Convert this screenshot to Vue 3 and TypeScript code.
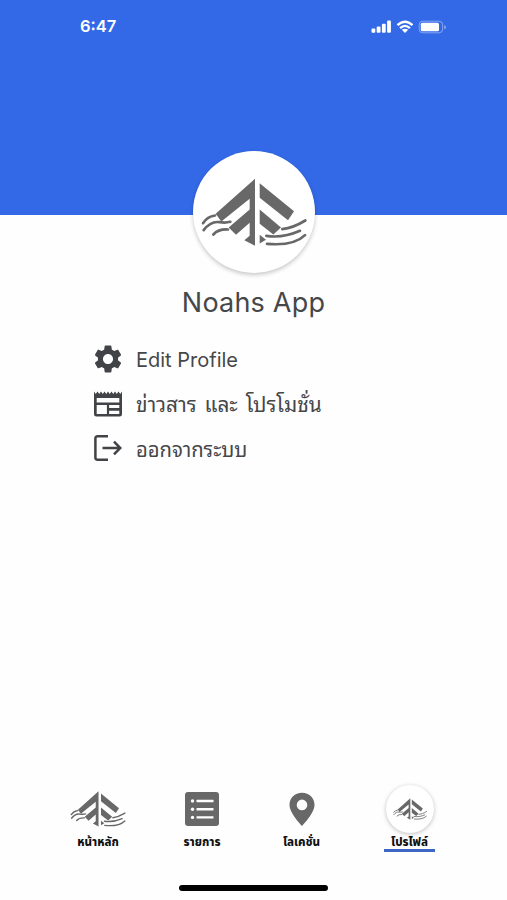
<script setup lang="ts">
import { ref } from 'vue'

type Icon = 'gear' | 'news' | 'exit'
type Tab = 'home' | 'list' | 'pin' | 'profile'

interface MenuItem {
  icon: Icon
  label: string
}

interface TabItem {
  id: Tab
  label: string
}

const menu: MenuItem[] = [
  { icon: 'gear', label: 'Edit Profile' },
  { icon: 'news', label: 'ข่าวสาร และ โปรโมชั่น' },
  { icon: 'exit', label: 'ออกจากระบบ' },
]

const tabs: TabItem[] = [
  { id: 'home', label: 'หน้าหลัก' },
  { id: 'list', label: 'รายการ' },
  { id: 'pin', label: 'โลเคชั่น' },
  { id: 'profile', label: 'โปรไฟล์' },
]

const active = ref<Tab>('profile')
</script>

<template>
  <svg class="defs" width="0" height="0" aria-hidden="true">
    <symbol id="logo" viewBox="45 98 318 206">
      <g fill="currentColor">
        <path d="M207 100V301L175 284L191 271V232L150 268L128 246L191 192V160L106 228L89 205Z" />
        <path d="M221 113L324 197L306 224L221 157Z" />
        <path d="M221 192L285 246L262 267L221 235Z" />
        <path d="M221 268L240 283L221 294Z" />
      </g>
      <g fill="none" stroke="currentColor" stroke-width="8" stroke-linecap="round">
        <path d="M51 233Q64 213 87 210" />
        <path d="M53 254C68 234 82 227 101 230Q118 233 133 229" />
        <path d="M82 267Q98 250 126 252" />
        <path d="M358 225C330 242 315 248 289 251" />
        <path d="M241 271C280 277 310 270 342 256" />
        <path d="M243 295C288 299 332 294 357 269" />
      </g>
    </symbol>
  </svg>

  <main class="screen">
    <header class="banner">
      <div class="status">
        <span class="time">6:47</span>
        <svg class="signals" width="76" height="16" viewBox="0 0 76 16" aria-hidden="true">
          <g fill="#fff">
            <rect x="0.500" y="9.500" width="3.800" height="4.200" rx="1" />
            <rect x="5.700" y="7.500" width="3.800" height="6.200" rx="1" />
            <rect x="10.900" y="4.800" width="3.800" height="8.900" rx="1" />
            <rect x="16.100" y="1.600" width="3.800" height="12.100" rx="1" />
            <path d="M30.800 10.800L34 14L37.200 10.800Q34 8.600 30.800 10.800Z" />
            <rect x="49.800" y="3.800" width="18.200" height="8.400" rx="1.500" />
            <path d="M73.300 6V10.400Q75 9.700 75 8.200Q75 6.700 73.300 6Z" opacity=".45" />
          </g>
          <g fill="none" stroke="#fff">
            <path d="M26.500 6.200Q34 -.8 41.500 6.200" stroke-width="2.500" />
            <path d="M29.100 9.100Q34 4.700 38.900 9.100" stroke-width="2.300" />
            <rect x="48.200" y="2.200" width="23.400" height="11.600" rx="3.500" opacity=".4" />
          </g>
        </svg>
      </div>
    </header>

    <section class="summary">
      <div class="avatar">
        <svg class="avatar-logo"><use href="#logo" /></svg>
      </div>
      <h1 class="name">Noahs App</h1>
    </section>

    <ul class="menu">
      <li v-for="item in menu" :key="item.icon" class="menu-item">
        <svg v-if="item.icon === 'gear'" class="menu-icon" viewBox="2 2 20 20">
          <path
            fill="currentColor"
            d="M19.140 12.940c.04-.3.060-.61.060-.94 0-.32-.02-.64-.07-.94l2.030-1.580c.18-.14.230-.41.120-.61l-1.920-3.320c-.12-.22-.37-.29-.59-.22l-2.390.96c-.5-.38-1.030-.7-1.620-.94l-.36-2.540c-.04-.24-.24-.41-.48-.41h-3.840c-.24 0-.43.17-.47.41l-.36 2.540c-.59.24-1.130.57-1.620.94l-2.390-.96c-.22-.08-.47 0-.59.22L2.740 8.870c-.12.21-.08.47.12.61l2.030 1.580c-.05.3-.09.63-.09.94s.02.64.070.94l-2.030 1.580c-.18.14-.23.41-.12.61l1.920 3.320c.12.22.370.29.590.22l2.390-.96c.5.38 1.030.7 1.620.94l.36 2.540c.05.24.240.41.480.41h3.840c.24 0 .44-.17.470-.41l.36-2.540c.59-.24 1.130-.56 1.620-.94l2.390.96c.22.080.470 0 .59-.22l1.920-3.320c.12-.22.070-.47-.12-.61l-2.010-1.580zM12 15.600c-1.980 0-3.600-1.620-3.600-3.600s1.620-3.600 3.600-3.600 3.600 1.620 3.600 3.600-1.620 3.600-3.600 3.600z"
          />
        </svg>
        <svg v-else-if="item.icon === 'news'" class="menu-icon" viewBox="0 0 28 28">
          <path
            fill="currentColor"
            fill-rule="evenodd"
            d="M0 1.500L1.750 4L3.500 1.500L5.250 4L7 1.500L8.750 4L10.500 1.500L12.250 4L14 1.500L15.750 4L17.500 1.500L19.250 4L21 1.500L22.750 4L24.500 1.500L26.250 4L28 1.500V23.900Q28 26.400 25.500 26.400H2.500Q0 26.400 0 23.900ZM2.700 7.900V12.600H25.300V7.900ZM2.700 14.900V23.900H12.900V14.900ZM15.100 14.900V18.100H25.300V14.900ZM15.100 20.700V23.900H25.300V20.700Z"
          />
        </svg>
        <svg v-else class="menu-icon" viewBox="0 0 28 28">
          <g fill="none" stroke="currentColor" stroke-width="2.500">
            <path d="M14 2.300H3.500Q1.400 2.300 1.400 4.400V23.600Q1.400 25.700 3.500 25.700H14" />
            <path d="M8.500 14H26.500M20 7.700L26.300 14L20 20.300" />
          </g>
        </svg>
        <span class="menu-label" :class="item.icon">{{ item.label }}</span>
      </li>
    </ul>

    <nav class="tabs">
      <button
        v-for="tab in tabs"
        :key="tab.id"
        class="tab"
        :class="{ active: active === tab.id }"
        @click="active = tab.id"
      >
        <span class="tab-icon">
          <svg v-if="tab.id === 'home'" class="home-logo"><use href="#logo" /></svg>
          <svg v-else-if="tab.id === 'list'" width="34" height="34" viewBox="0 0 34 34">
            <rect width="34" height="34" rx="3" fill="currentColor" />
            <g fill="#fff">
              <circle cx="7.500" cy="9" r="1.700" />
              <circle cx="7.500" cy="17.200" r="1.700" />
              <circle cx="7.500" cy="25.400" r="1.700" />
              <rect x="11.500" y="7.800" width="17" height="2.400" rx=".5" />
              <rect x="11.500" y="16" width="17" height="2.400" rx=".5" />
              <rect x="11.500" y="24.200" width="17" height="2.400" rx=".5" />
            </g>
          </svg>
          <svg v-else-if="tab.id === 'pin'" class="pin-icon" width="26" height="34" viewBox="0 0 26 34">
            <path
              fill="currentColor"
              fill-rule="evenodd"
              d="M13 .8C5.800 .8 .5 6 .5 12.800C.5 21.500 13 34 13 34S25.500 21.500 25.500 12.800C25.500 6 20.200 .8 13 .8ZM13 7.600A5.300 5.300 0 1 1 13 18.200A5.300 5.300 0 1 1 13 7.600Z"
            />
          </svg>
          <span v-else class="tab-avatar">
            <svg class="small-logo"><use href="#logo" /></svg>
          </span>
        </span>
        <span class="tab-label">{{ tab.label }}</span>
      </button>
    </nav>
    <div class="home-indicator"></div>
  </main>
</template>

<style>
body {
  background: #fefefe;
}
</style>

<style scoped>
.defs {
  display: block;
}

.screen {
  height: 900px;
  display: flex;
  flex-direction: column;
  overflow: hidden;
  background: #fefefe;
  color: #464749;
  font-family: Inter, 'Noto Sans Thai', 'Noto Sans', sans-serif;
}

.banner {
  height: 215px;
  flex: none;
  background: #3369e7;
}

.status {
  display: flex;
  justify-content: space-between;
  align-items: center;
  padding: 16px 60px 0 80px;
  height: 21px;
  color: #fff;
}

.time {
  font-size: 16.500px;
  font-weight: 600;
  line-height: 21px;
}

.summary {
  display: flex;
  flex-direction: column;
  align-items: center;
  margin-top: -64px;
}

.avatar {
  width: 122px;
  height: 122px;
  border-radius: 50%;
  background: #fff;
  box-shadow: 0 2px 4px rgba(0, 0, 0, 0.22);
  display: flex;
  align-items: center;
  justify-content: center;
}

.avatar-logo {
  width: 106px;
  height: 69px;
  color: #686868;
}

.name {
  margin: 13px 0 0;
  font-size: 27px;
  line-height: 34px;
  font-weight: 400;
  letter-spacing: 0.2px;
}

.menu {
  list-style: none;
  margin: 17px 0 0;
  padding: 0 0 0 94px;
}

.menu-item {
  height: 44.500px;
  display: flex;
  align-items: center;
  gap: 14px;
}

.menu-icon {
  width: 28px;
  height: 28px;
  flex: none;
  color: #424346;
}

.menu-label {
  padding-top: 2px;
  font-size: 20px;
  line-height: 30px;
  white-space: nowrap;
}

.menu-label.news,
.menu-label.exit {
  padding: 0 0 1px;
  font-family: 'Noto Sans Thai Looped', Loma, Garuda, Waree, Umpush, 'Noto Serif Thai', 'Noto Sans Thai', sans-serif;
}

.menu-label.news {
  font-size: 20.800px;
  word-spacing: 2.500px;
}

.menu-label.exit {
  font-size: 20.200px;
}

.tabs {
  margin-top: auto;
  display: grid;
  grid-template-columns: 104px 104px 95px 121px;
  padding-left: 46px;
  flex: none;
}

.tab {
  display: flex;
  flex-direction: column;
  align-items: center;
  border: 0;
  padding: 0;
  background: none;
  color: #686868;
  font-family: inherit;
}

.tab-icon {
  height: 50px;
  display: flex;
  align-items: center;
}

.home-logo {
  width: 56px;
  height: 36px;
}

.tab-avatar {
  width: 48px;
  height: 48px;
  border-radius: 50%;
  background: #fff;
  box-shadow: 0 1px 4px rgba(0, 0, 0, 0.25);
  display: flex;
  align-items: center;
  justify-content: center;
}

.small-logo {
  width: 34px;
  height: 22px;
}

.tab-label {
  height: 15px;
  line-height: 16px;
  font-size: 11.500px;
  font-weight: 800;
  color: #111;
  white-space: nowrap;
  border-bottom: 3px solid transparent;
  width: 51px;
  display: flex;
  justify-content: center;
}

.active .tab-label {
  border-color: #3e66c4;
}

.home-indicator {
  width: 149px;
  height: 6px;
  margin: 33px auto 9px;
  border-radius: 3px;
  background: #000;
  flex: none;
}
</style>
